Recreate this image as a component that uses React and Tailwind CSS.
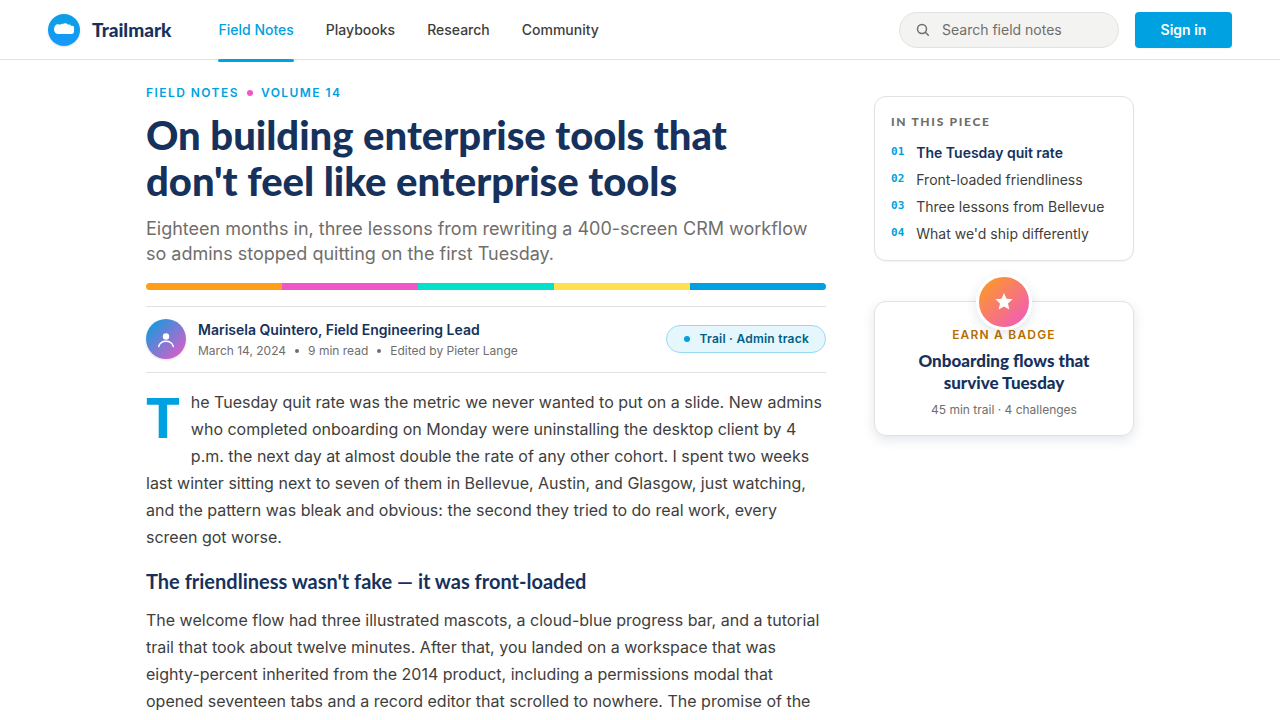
import React, { useState } from "react";

const NAV_LINKS = ["Field Notes", "Playbooks", "Research", "Community"];

const STRIPES = ["bg-[#ff9e1b]", "bg-[#f056c7]", "bg-[#04e1cb]", "bg-[#ffe14d]", "bg-[#00a1e0]"];

const SECTIONS = [
  "The Tuesday quit rate",
  "Front-loaded friendliness",
  "Three lessons from Bellevue",
  "What we'd ship differently",
];

const Header = () => {
  const [query, setQuery] = useState("");

  return (
    <header className="h-[60px] flex items-center px-12 bg-white border-b border-[#e2e2e2]">
      <a href="#home" className="flex items-center gap-3">
        <span className="w-8 h-8 rounded-full bg-linear-to-b from-[#0a9fe3] to-[#1798fb] flex items-center justify-center shadow-sm">
          <svg className="w-5 h-5" viewBox="0 0 20 20" fill="white" aria-hidden="true">
            <path d="M4.500 14C1.800 14 0 12.200 0 9.500C0 6.200 1.600 4.200 4 4.200c1 0 1.700.2 2.300.6C6.900 3.900 8 3.700 8.800 4 9.600 3.200 10.600 3 11.600 3.200c1.100.1 2 .7 2.500 1.500.9-.2 1.700-.1 2.300.3.300.3.600.6.800.9 1.200-.2 2.200.1 2.800.8V11c0 2-.8 3-2.300 3z" />
          </svg>
        </span>
        <span className="font-['Lato','Noto_Sans',sans-serif] text-[19px] leading-6 font-black text-[#16325c]">
          Trailmark
        </span>
      </a>
      <nav className="flex self-stretch gap-8 ml-[47px]" aria-label="Main">
        {NAV_LINKS.map((link, i) => (
          <a
            key={link}
            href="#nav"
            className={`relative flex items-center text-sm font-medium ${i === 0 ? "text-[#00a1e0]" : "text-[#3e3e3c]"}`}
          >
            {link}
            {i === 0 && <span className="absolute inset-x-0 -bottom-[3px] h-[3px] rounded-[2px] bg-[#00a1e0]" />}
          </a>
        ))}
      </nav>
      <label className="ml-auto w-[220px] h-9 flex items-center gap-3 px-4 rounded-full bg-[#f3f3f2] border border-[#e2e2e2] text-[#706e6b]">
        <svg className="w-[14px] h-[14px] shrink-0" viewBox="0 0 14 14" fill="none" stroke="currentColor" strokeWidth="1.5" strokeLinecap="round" aria-hidden="true">
          <circle cx="6" cy="6" r="4.500" />
          <path d="M9.300 9.300L12.300 12.300" />
        </svg>
        <input
          type="search"
          aria-label="Search field notes"
          placeholder="Search field notes"
          value={query}
          onChange={(e) => setQuery(e.target.value)}
          className="w-full min-w-0 bg-transparent text-sm placeholder-[#706e6b] focus:outline-none"
        />
      </label>
      <button type="button" className="ml-4 h-9 min-w-[97px] px-6 rounded bg-[#00a1e0] text-white text-sm font-semibold shadow-xs">
        Sign in
      </button>
    </header>
  );
};

const Byline = () => (
  <div className="mt-4 py-3 border-y border-[#e2e2e2] flex items-start gap-3">
    <span className="w-10 h-10 rounded-full bg-linear-to-br/srgb from-[#00a1e0] to-[#f056c7] flex items-center justify-center shadow-sm">
      <svg className="w-5 h-5" viewBox="0 0 20 20" fill="none" aria-hidden="true">
        <circle cx="10" cy="7.500" r="3.200" fill="white" />
        <path d="M2.700 17.500C3.700 14.100 6.400 12.300 10 12.300s6.300 1.800 7.300 5.200" stroke="white" strokeWidth="1.500" strokeLinecap="round" />
      </svg>
    </span>
    <div>
      <p className="text-sm leading-[21px] font-semibold text-[#16325c]">Marisela Quintero, Field Engineering Lead</p>
      <p className="mt-0.5 flex items-center gap-[9px] text-xs leading-[18px] text-[#706e6b]">
        <span>March 14, 2024</span>
        <span className="w-1 h-1 rounded-full bg-[#706e6b]" />
        <span>9 min read</span>
        <span className="w-1 h-1 rounded-full bg-[#706e6b]" />
        <span>Edited by Pieter Lange</span>
      </p>
    </div>
    <span className="ml-auto mt-1.5 h-7 flex items-center gap-2.5 pl-[17px] pr-4 rounded-full bg-[#e5f6fd] border border-[#99d9f3] text-xs font-semibold tracking-[0.02em] text-[#005f85]">
      <span className="w-1.5 h-1.5 rounded-full bg-[#00a1e0]" />
      Trail · Admin track
    </span>
  </div>
);

const Article = () => (
  <article className="flex-1 min-w-0 max-w-[680px]">
    <p className="flex items-center gap-2 text-xs leading-[18px] font-semibold tracking-[0.12em] text-[#00a1e0]">
      <span>FIELD NOTES</span>
      <span className="w-1.5 h-1.5 rounded-full bg-[#f056c7]" />
      <span>VOLUME 14</span>
    </p>
    <h1 className="mt-2.5 font-['Lato','Noto_Sans',sans-serif] text-[40px] leading-[46px] font-black text-[#16325c]">
      On building enterprise tools that
      <br />
      don't feel like enterprise tools
    </h1>
    <p className="mt-3 text-lg leading-[25px] text-[#706e6b]">
      Eighteen months in, three lessons from rewriting a 400-screen CRM workflow so admins stopped quitting on the first
      Tuesday.
    </p>
    <div className="mt-[17px] h-[7px] flex rounded-full overflow-hidden">
      {STRIPES.map((color) => (
        <span key={color} className={`flex-1 ${color}`} />
      ))}
    </div>
    <Byline />
    <p className="mt-4 text-base leading-[27px] text-[#3e3e3c] first-letter:float-left first-letter:mr-[11px] first-letter:text-[56px] first-letter:leading-[56px] first-letter:font-black first-letter:font-['Lato'] first-letter:text-[#00a1e0]">
      The Tuesday quit rate was the metric we never wanted to put on a slide. New admins who completed onboarding on
      Monday were uninstalling the desktop client by 4 p.m. the next day at almost double the rate of any other cohort. I
      spent two weeks last winter sitting next to seven of them in Bellevue, Austin, and Glasgow, just watching, and the
      pattern was bleak and obvious: the second they tried to do real work, every screen got worse.
    </p>
    <h2 className="mt-4 font-['Lato','Noto_Sans',sans-serif] text-[20px] leading-[28px] font-bold text-[#16325c]">
      The friendliness wasn't fake — it was front-loaded
    </h2>
    <p className="mt-3 text-base leading-[27px] text-[#3e3e3c]">
      The welcome flow had three illustrated mascots, a cloud-blue progress bar, and a tutorial trail that took about
      twelve minutes. After that, you landed on a workspace that was eighty-percent inherited from the 2014 product,
      including a permissions modal that opened seventeen tabs and a record editor that scrolled to nowhere. The promise
      of the
    </p>
  </article>
);

const Sidebar = () => (
  <aside className="w-[260px] shrink-0 pt-3">
    <nav aria-label="In this piece" className="p-4 rounded-xl bg-white border border-[#e2e2e2] shadow-xs">
      <h2 className="font-['Lato','Noto_Sans',sans-serif] text-xs leading-[18px] font-black tracking-[0.14em] text-[#706e6b]">
        IN THIS PIECE
      </h2>
      <ol className="mt-[11px] flex flex-col gap-1.5">
        {SECTIONS.map((title, i) => (
          <li key={title}>
            <a
              href="#section"
              className={`flex gap-3 text-sm leading-[21px] ${i === 0 ? "font-semibold text-[#16325c]" : "text-[#3e3e3c]"}`}
            >
              <span className="font-['DejaVu_Sans_Mono',monospace] text-[11px] leading-5 font-bold text-[#00a1e0]">
                0{i + 1}
              </span>
              {title}
            </a>
          </li>
        ))}
      </ol>
    </nav>
    <section className="relative mt-10 px-4 pt-6 pb-4 rounded-xl bg-white border border-[#e2e2e2] shadow-[0_4px_12px_rgba(22,50,92,0.12)] text-center">
      <p className="text-xs leading-[18px] font-semibold tracking-widest text-[#b86e00]">EARN A BADGE</p>
      <span className="absolute -top-7 left-1/2 -translate-x-1/2 w-14 h-14 rounded-full border-3 border-white bg-linear-to-br/srgb from-[#ff9e1b] to-[#f056c7] flex items-center justify-center shadow-[0_4px_12px_rgba(22,50,92,0.12)]">
        <svg className="w-5 h-5" viewBox="0 0 20 20" fill="white" aria-hidden="true">
          <path d="M10 1l2.500 5.700 6.100.6-4.600 4.100 1.300 6.100L10 14.400l-5.300 3.100L6 11.400 1.400 7.300l6.100-.6z" />
        </svg>
      </span>
      <h3 className="mt-1.5 px-5 font-['Lato','Noto_Sans',sans-serif] text-[17px] leading-[22px] font-black text-[#16325c]">
        Onboarding flows that survive Tuesday
      </h3>
      <p className="mt-[7px] text-xs leading-[18px] text-[#706e6b]">45 min trail · 4 challenges</p>
    </section>
  </aside>
);

const App = () => (
  <div className="h-screen overflow-y-auto overflow-x-hidden [scrollbar-width:none] bg-white font-['Inter',sans-serif]">
    <Header />
    <main className="flex justify-center gap-12 px-12 pt-6">
      <Article />
      <Sidebar />
    </main>
  </div>
);

export default App;
